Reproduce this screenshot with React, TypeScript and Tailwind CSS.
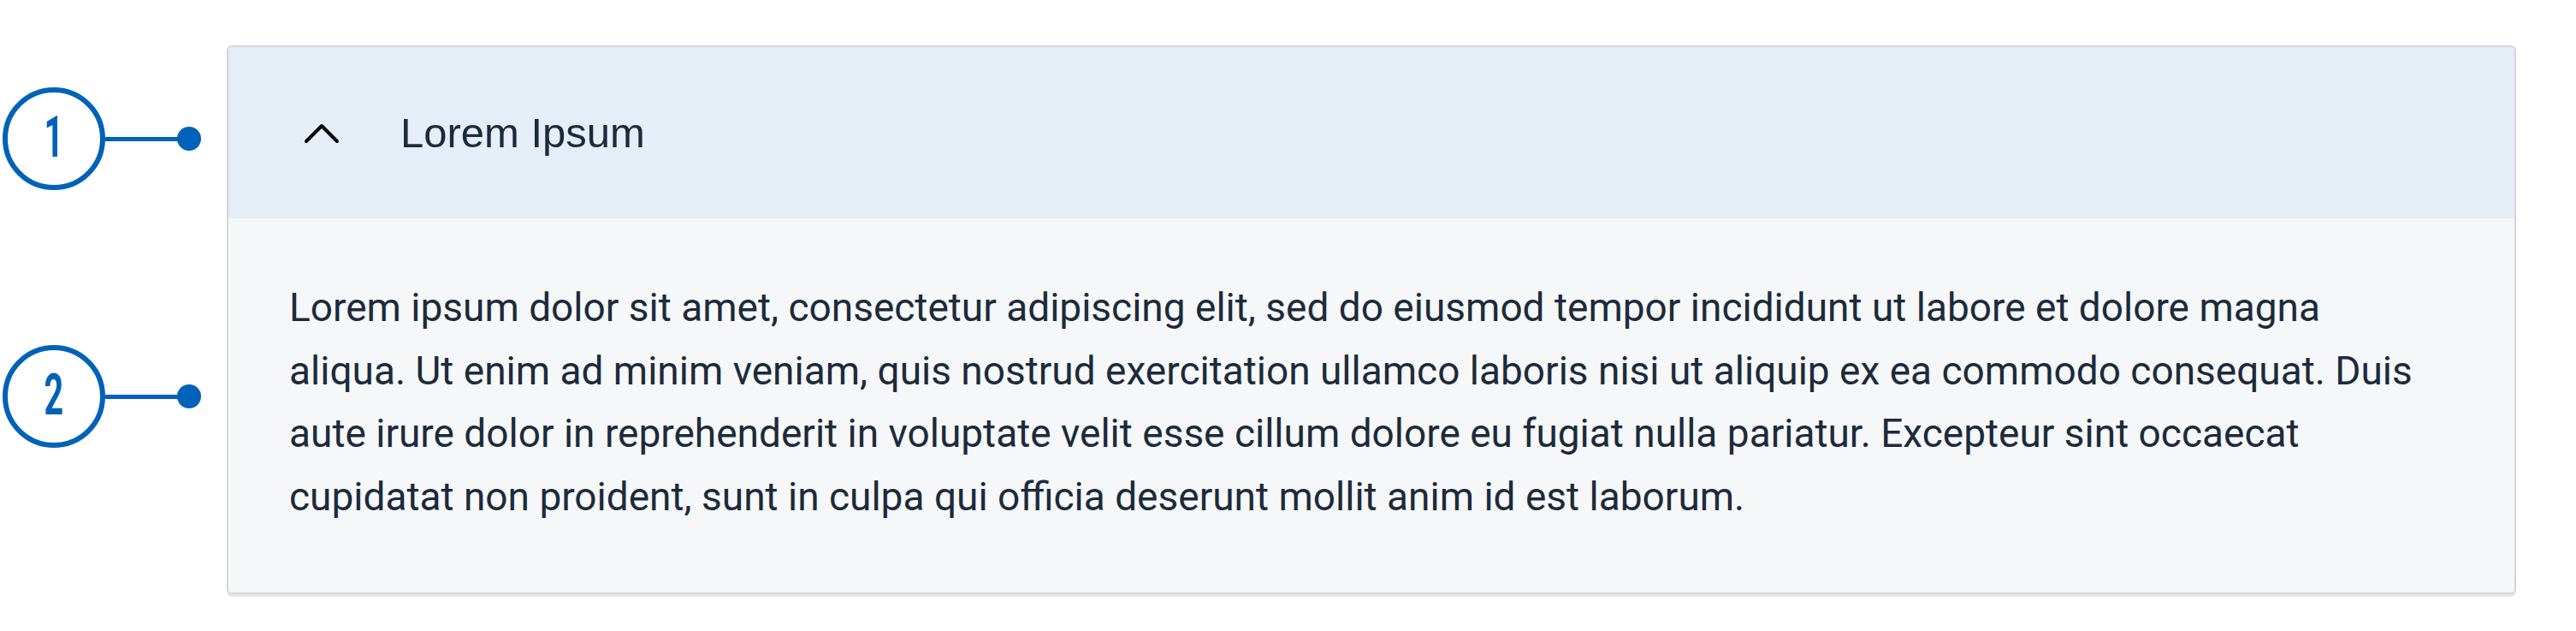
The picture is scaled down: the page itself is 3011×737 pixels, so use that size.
const lines = [
  "Lorem ipsum dolor sit amet, consectetur adipiscing elit, sed do eiusmod tempor incididunt ut labore et dolore magna",
  "aliqua. Ut enim ad minim veniam, quis nostrud exercitation ullamco laboris nisi ut aliquip ex ea commodo consequat. Duis",
  "aute irure dolor in reprehenderit in voluptate velit esse cillum dolore eu fugiat nulla pariatur. Excepteur sint occaecat",
  "cupidatat non proident, sunt in culpa qui officia deserunt mollit anim id est laborum.",
];

function Callout({ n, className }: { n: number; className?: string }) {
  return (
    <div className={"flex items-center " + (className ?? "")}>
      <div className="w-[120px] h-[120px] rounded-full border-[6px] border-[#0062b8] flex items-center justify-center">
        <span className="font-['Roboto'] font-bold text-[66px] leading-none text-[#0062b8] scale-x-[0.6] -mt-[2px]">
          {n}
        </span>
      </div>
      <div className="w-[86px] h-[5px] bg-[#0062b8]" />
      <div className="w-[28px] h-[28px] rounded-full bg-[#0062b8] -ml-[2px]" />
    </div>
  );
}

export default function App() {
  return (
    <div className="w-[3011px] h-[737px] bg-white flex pt-[53px] pl-[3px]">
      <div className="w-[262px] flex flex-col shrink-0">
        <Callout n={1} className="mt-[49px]" />
        <Callout n={2} className="mt-[181px]" />
      </div>
      <div className="w-[2676px] h-[641px] rounded-[6px] border-2 border-[#d3d6da] shadow-[0_3px_1px_rgba(0,0,0,0.1)] overflow-hidden flex flex-col">
        <div className="h-[200px] bg-[#e5edf7] flex items-center pl-[88px] shrink-0">
          <svg width="42" height="25" viewBox="0 0 42 25" className="shrink-0">
            <polyline
              points="3,22 21,4 39,22"
              fill="none"
              stroke="#000"
              strokeWidth="4"
              strokeLinecap="round"
              strokeLinejoin="round"
            />
          </svg>
          <span className="ml-[71px] font-['Liberation_Sans'] text-[49px] text-[#1b2a3c] leading-none">
            Lorem Ipsum
          </span>
        </div>
        <div className="flex-1 bg-[#f6f7f9] pl-[71px] pt-[68px]">
          <p className="font-['Roboto'] text-[46px] leading-[73.5px] text-[#1c2b3b] whitespace-nowrap">
            {lines.map((l, i) => (
              <span key={i} className="block">
                {l}
              </span>
            ))}
          </p>
        </div>
      </div>
    </div>
  );
}
